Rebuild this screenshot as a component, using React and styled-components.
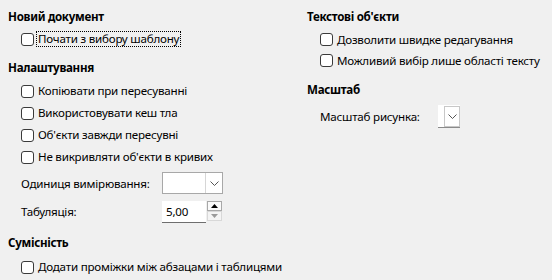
import styled, { createGlobalStyle } from "styled-components";

const Global = createGlobalStyle`
  html, body {
    margin: 0;
    background: #f0f0f0;
  }
  body {
    font-family: "Noto Sans", "Segoe UI", sans-serif;
    font-size: 11.6px;
    letter-spacing: -0.22px;
    color: #000;
  }
`

const Page = styled.div`
  width: 552px;
  height: 280px;
  box-sizing: border-box;
  padding: 9px 0 0 8px;
  display: grid;
  grid-template-columns: 299px 1fr;
  overflow: hidden;
`

const Column = styled.div`
  display: flex;
  flex-direction: column;
`

const Heading = styled.div`
  font-weight: 700;
  line-height: 16px;
  height: 16px;
  letter-spacing: -0.3px;
  margin-top: ${(p) => p.$top || 0}px;
  margin-bottom: ${(p) => p.$bottom || 0}px;
`

const Row = styled.label`
  display: flex;
  align-items: center;
  gap: 4px;
  height: ${(p) => p.$h || 22}px;
  padding-left: 13px;
  white-space: nowrap;
`

const Box = styled.span`
  width: 11px;
  height: 11px;
  flex: none;
  border: 1px solid #3a3a3a;
  border-radius: 3px;
  background: #fff;
`

const Text = styled.span`
  line-height: 14px;
  padding: 0 1px;
  margin-left: -1px;
  outline: ${(p) => (p.$focus ? "1px dotted #000" : "none")};
  outline-offset: 0;
`

const Field = styled.div`
  display: flex;
  align-items: center;
  height: ${(p) => p.$h || 26}px;
  padding-left: 13px;
  margin-top: ${(p) => p.$top || 0}px;
`

const Label = styled.span`
  width: ${(p) => p.$w}px;
  flex: none;
`

const Combo = styled.div`
  width: 59px;
  height: 20px;
  background: #fff;
  border: 1px solid #a8a8a8;
  display: flex;
  justify-content: flex-end;
`

const ComboButton = styled.div`
  width: 16px;
  border-left: 1px solid #d6d6d6;
  display: flex;
  align-items: center;
  justify-content: center;
  background: #fff;
`

const SmallCombo = styled.div`
  width: 22px;
  height: 22px;
  background: #fff;
  border-bottom: 1px solid #8a8a8a;
  display: flex;
  justify-content: flex-end;
  align-items: flex-start;
`

const SmallButton = styled.div`
  width: 14px;
  height: 19px;
  margin-top: 1px;
  border: 1px solid #c8c8c8;
  display: flex;
  align-items: center;
  justify-content: center;
`

const Spin = styled.div`
  display: flex;
  align-items: center;
  gap: 1px;
`

const SpinField = styled.div`
  width: 40px;
  height: 21px;
  background: #fff;
  border-bottom: 1px solid #6e6e6e;
  padding-left: 4px;
  display: flex;
  align-items: center;
  margin-top: 1px;
`

const SpinButtons = styled.div`
  display: flex;
  flex-direction: column;
  width: 15px;
`

const SpinBtn = styled.div`
  height: 8px;
  border: 1px solid ${(p) => (p.$dim ? "#d8d8d8" : "#a8a8a8")};
  background: ${(p) => (p.$dim ? "#f4f4f4" : "#fafafa")};
  display: flex;
  align-items: center;
  justify-content: center;
`

const Chevron = () => (
  <svg width="9" height="5" viewBox="0 0 9 5">
    <path d="M0.5 0.5 L4.5 4.5 L8.5 0.5" fill="none" stroke="#555" strokeWidth="1" />
  </svg>
)

const Tri = ({ up, color }) => (
  <svg width="7" height="4" viewBox="0 0 7 4">
    <path d={up ? "M0 4 L3.5 0 L7 4 Z" : "M0 0 L3.5 4 L7 0 Z"} fill={color} />
  </svg>
)

const Check = ({ children, focus, h }) => (
  <Row $h={h}>
    <Box />
    <Text $focus={focus}>{children}</Text>
  </Row>
)

const App = () => (
  <>
    <Global />
    <Page>
      <Column>
        <Heading $bottom={3}>Новий документ</Heading>
        <Check focus>Почати з вибору шаблону</Check>

        <Heading $top={10} $bottom={4}>Налаштування</Heading>
        <Check>Копіювати при пересуванні</Check>
        <Check>Використовувати кеш тла</Check>
        <Check>Об'єкти завжди пересувні</Check>
        <Check>Не викривляти об'єкти в кривих</Check>

        <Field $top={2}>
          <Label $w={141}>Одиниця вимірювання:</Label>
          <Combo>
            <ComboButton>
              <Chevron />
            </ComboButton>
          </Combo>
        </Field>
        <Field $top={2}>
          <Label $w={141}>Табуляція:</Label>
          <Spin>
            <SpinField>5,00</SpinField>
            <SpinButtons>
              <SpinBtn>
                <Tri up color="#000" />
              </SpinBtn>
              <SpinBtn $dim>
                <Tri color="#9a9a9a" />
              </SpinBtn>
            </SpinButtons>
          </Spin>
        </Field>

        <Heading $top={11} $bottom={5}>Сумісність</Heading>
        <Check>Додати проміжки між абзацами і таблицями</Check>
      </Column>

      <Column>
        <Heading $bottom={4}>Текстові об'єкти</Heading>
        <Check h={21}>Дозволити швидке редагування</Check>
        <Check h={21}>Можливий вибір лише області тексту</Check>

        <Heading $top={11} $bottom={5}>Масштаб</Heading>
        <Field>
          <Label $w={118}>Масштаб рисунка:</Label>
          <SmallCombo>
            <SmallButton>
              <Chevron />
            </SmallButton>
          </SmallCombo>
        </Field>
      </Column>
    </Page>
  </>
)

export default App
